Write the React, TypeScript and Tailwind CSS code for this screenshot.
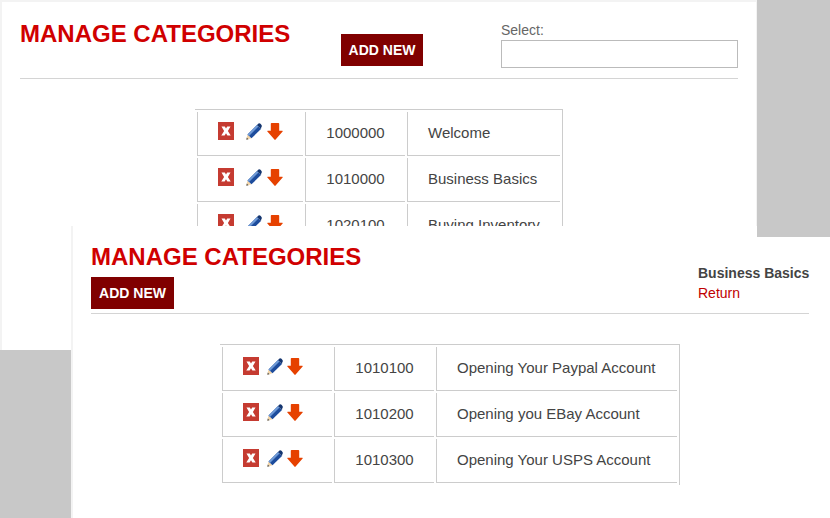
const font = "font-['Liberation_Sans',Arial,sans-serif]";

function XIcon() {
  return (
    <svg width="16" height="18" viewBox="0 0 16 18" className="shrink-0">
      <rect width="16" height="18" fill="#c53b31" />
      <path d="M3.500 4.500h3.300L8 6.600l1.200-2.100h3.300L9.900 9l2.800 4.500H9.400L8 11.300l-1.400 2.200H3.300L6.100 9z" fill="#fff" />
    </svg>
  );
}

function Pencil() {
  return (
    <svg width="16" height="17" viewBox="0 0 16 17" className="mt-px shrink-0">
      <path d="M0.300 16.800 L1.500 11.500 L5.500 15.300z" fill="#f3d5a8" />
      <path d="M0.300 16.800 L0.800 14.500 L2.500 16.200z" fill="#555" />
      <path d="M1.500 11.500 L11 2 L15 6 L5.500 15.300z" fill="#1d4c9c" />
      <path d="M1.500 11.500 L11 2 L12.500 3.500 L3 13z" fill="#6f9ad6" />
      <path d="M11 2 L12.500 0.600 Q13.500 0 14.500 0.800 L15.500 2 Q16.200 3.200 15.300 4.300 L15 6z" fill="#14356f" />
    </svg>
  );
}

function ArrowDown() {
  return (
    <svg width="16" height="17" viewBox="0 0 16 17" className="mt-px shrink-0">
      <path d="M3.800 0.800Q3.800 0 4.600 0h6.800Q12.200 0 12.200 0.800V7.800h3Q16.200 7.800 15.600 8.600L8.600 16.600Q8 17.200 7.400 16.600L0.400 8.600Q-0.200 7.800 0.800 7.800H3.800z" fill="#e64100" />
    </svg>
  );
}

type Row = { code: string; name: string };

type TableProps = {
  rows: Row[];
  firstW: string;
  nameW: string;
  gap: string;
  innerGap: string;
};

function CategoryTable({ rows, firstW, nameW, gap, innerGap }: TableProps) {
  return (
    <table className="border-separate border-spacing-x-[2px] border-spacing-y-[2px] border-t border-r border-[#ccc] text-[15px] text-[#444]">
      <tbody>
        {rows.map((r) => (
          <tr key={r.code}>
            <td className={`h-[44px] border-l border-b border-[#ccc] p-0 align-top ${firstW}`}>
              <div className={`flex pl-5 pt-[10px] ${gap}`}>
                <XIcon />
                <div className={`flex ${innerGap}`}>
                  <Pencil />
                  <ArrowDown />
                </div>
              </div>
            </td>
            <td className="w-[100px] border-l border-b border-[#ccc] p-0 text-center">{r.code}</td>
            <td className={`border-l border-b border-[#ccc] p-0 pl-5 ${nameW}`}>{r.name}</td>
          </tr>
        ))}
      </tbody>
    </table>
  );
}

export default function App() {
  return (
    <div className={`relative h-[518px] w-[830px] overflow-hidden bg-[#c8c8c8] ${font}`}>
      {/* back window */}
      <div className="absolute left-0 top-0 h-[350px] w-[757px] border-t-2 border-l-2 border-r border-[#f3f3f3] bg-white pl-[18px] pr-[18px]">
        <div className="flex h-[77px] border-b border-[#d4d4d4]">
          <h1 className="mt-[18px] w-[321px] text-[24px] font-bold leading-[28px] text-[#d00000]">MANAGE CATEGORIES</h1>
          <button className="mt-[32px] h-[32px] w-[82px] bg-[#800000] text-[14px] font-bold text-white">ADD NEW</button>
          <div className="ml-[78px] mt-[20px] flex-1 text-[14px] text-[#666]">
            <div className="leading-4">Select:</div>
            <input className="mt-[2px] block h-[28px] w-full border border-[#bbb] bg-white" />
          </div>
        </div>
        <div className="mt-[30px] flex justify-center">
          <CategoryTable
            firstW="w-[106px]"
            nameW="w-[153px]"
            gap="gap-[12px]"
            innerGap="gap-[5px]"
            rows={[
              { code: "1000000", name: "Welcome" },
              { code: "1010000", name: "Business Basics" },
              { code: "1020100", name: "Buying Inventory" },
            ]}
          />
        </div>
      </div>

      {/* front window */}
      <div className="absolute left-[71px] top-[226px] h-[292px] w-[759px] border-l-2 border-[#f3f3f3] bg-white pl-[18px] pr-[21px]">
        <div className="flex h-[88px] justify-between border-b border-[#d4d4d4] pt-[17px]">
          <div>
            <h1 className="text-[24px] font-bold leading-[28px] text-[#d00000]">MANAGE CATEGORIES</h1>
            <button className="mt-[6px] h-[32px] w-[83px] bg-[#800000] text-[14px] font-bold text-white">ADD NEW</button>
          </div>
          <div className="mt-[20px] w-[111px] whitespace-nowrap text-[14px] leading-[20px]">
            <div className="font-bold text-[#444]">Business Basics</div>
            <div className="text-[#c00000]">Return</div>
          </div>
        </div>
        <div className="mt-[30px] flex justify-center">
          <CategoryTable
            firstW="w-[110px]"
            nameW="w-[241px]"
            gap="gap-[8px]"
            innerGap="gap-[4px]"
            rows={[
              { code: "1010100", name: "Opening Your Paypal Account" },
              { code: "1010200", name: "Opening you EBay Account" },
              { code: "1010300", name: "Opening Your USPS Account" },
            ]}
          />
        </div>
      </div>

      {/* grey gap over the corner of the front window */}
      <div className="absolute left-[757px] top-0 h-[237px] w-[73px] bg-[#c8c8c8]" />
    </div>
  );
}
